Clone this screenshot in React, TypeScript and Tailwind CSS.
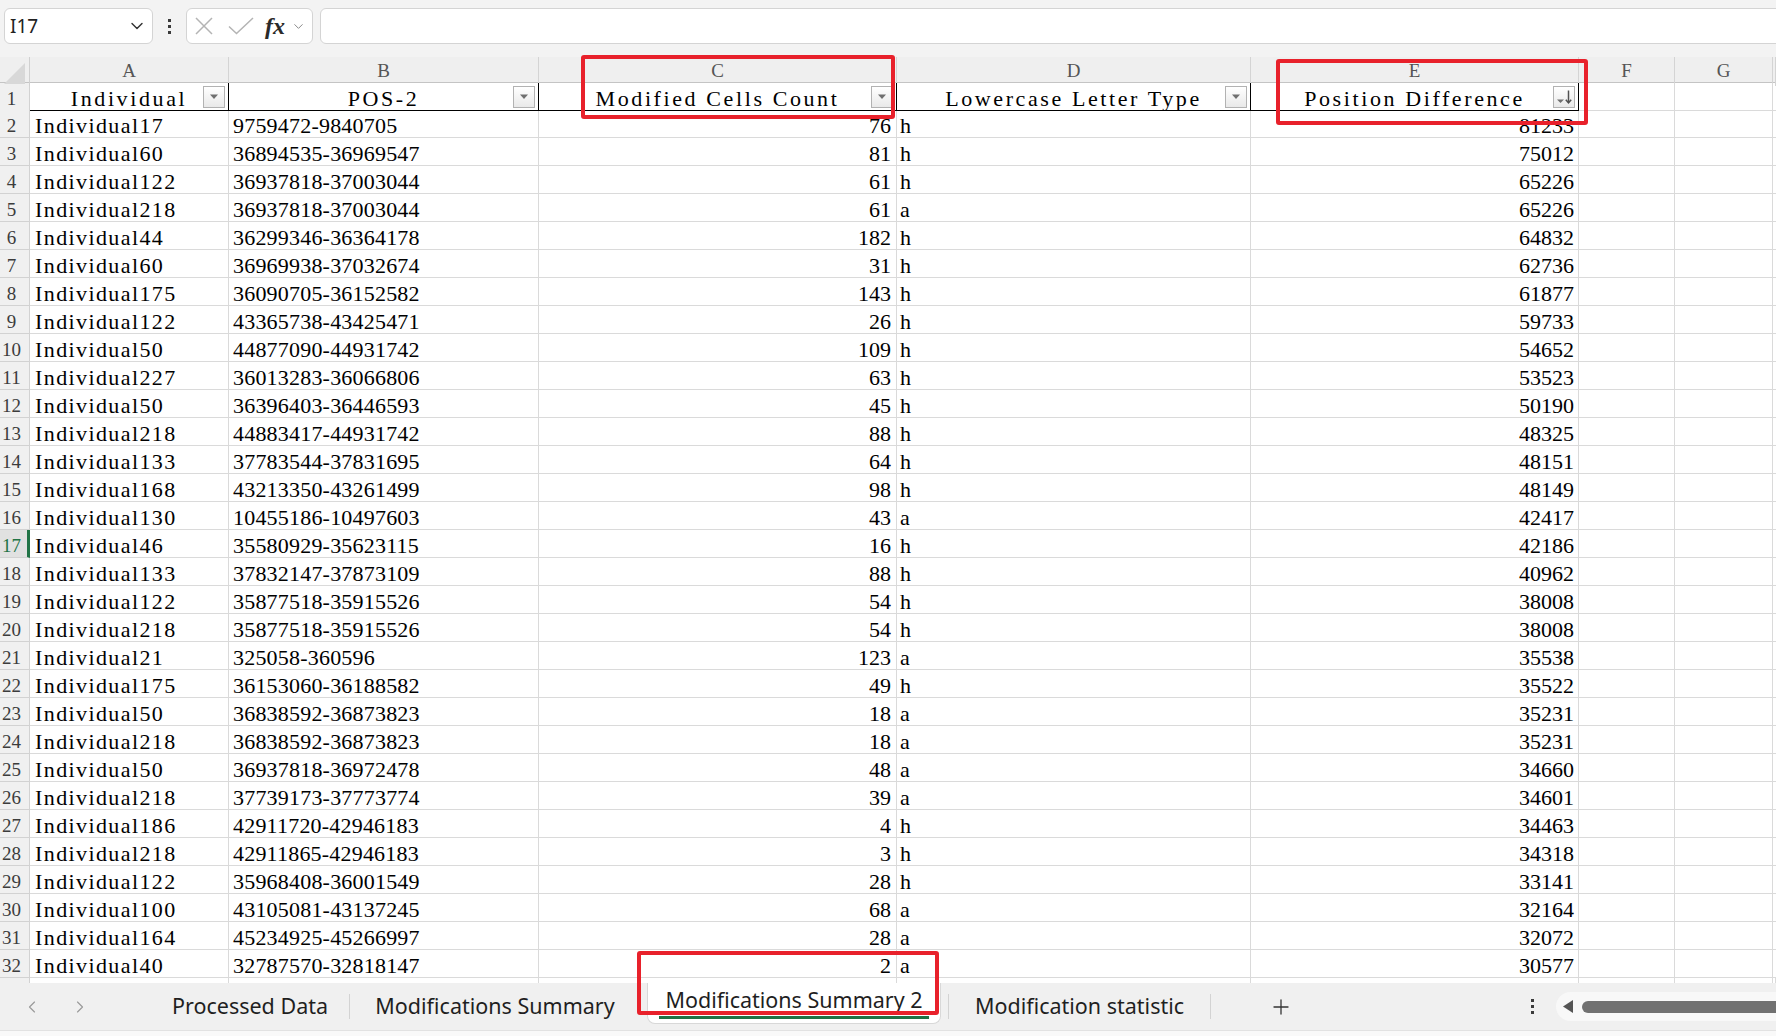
import { ChevronDown, ChevronLeft, ChevronRight, Plus } from 'lucide-react'

type Row = [string, string, number, string, number]

const DATA: Row[] = [
  ['Individual17', '9759472-9840705', 76, 'h', 81233],
  ['Individual60', '36894535-36969547', 81, 'h', 75012],
  ['Individual122', '36937818-37003044', 61, 'h', 65226],
  ['Individual218', '36937818-37003044', 61, 'a', 65226],
  ['Individual44', '36299346-36364178', 182, 'h', 64832],
  ['Individual60', '36969938-37032674', 31, 'h', 62736],
  ['Individual175', '36090705-36152582', 143, 'h', 61877],
  ['Individual122', '43365738-43425471', 26, 'h', 59733],
  ['Individual50', '44877090-44931742', 109, 'h', 54652],
  ['Individual227', '36013283-36066806', 63, 'h', 53523],
  ['Individual50', '36396403-36446593', 45, 'h', 50190],
  ['Individual218', '44883417-44931742', 88, 'h', 48325],
  ['Individual133', '37783544-37831695', 64, 'h', 48151],
  ['Individual168', '43213350-43261499', 98, 'h', 48149],
  ['Individual130', '10455186-10497603', 43, 'a', 42417],
  ['Individual46', '35580929-35623115', 16, 'h', 42186],
  ['Individual133', '37832147-37873109', 88, 'h', 40962],
  ['Individual122', '35877518-35915526', 54, 'h', 38008],
  ['Individual218', '35877518-35915526', 54, 'h', 38008],
  ['Individual21', '325058-360596', 123, 'a', 35538],
  ['Individual175', '36153060-36188582', 49, 'h', 35522],
  ['Individual50', '36838592-36873823', 18, 'a', 35231],
  ['Individual218', '36838592-36873823', 18, 'a', 35231],
  ['Individual50', '36937818-36972478', 48, 'a', 34660],
  ['Individual218', '37739173-37773774', 39, 'a', 34601],
  ['Individual186', '42911720-42946183', 4, 'h', 34463],
  ['Individual218', '42911865-42946183', 3, 'h', 34318],
  ['Individual122', '35968408-36001549', 28, 'h', 33141],
  ['Individual100', '43105081-43137245', 68, 'a', 32164],
  ['Individual164', '45234925-45266997', 28, 'a', 32072],
  ['Individual40', '32787570-32818147', 2, 'a', 30577],
]

const COLS = 'grid grid-cols-[30px_199px_310px_358px_354px_328px_96px_98px_1fr]'
// H only shows a sliver at the right edge, so its letter is left out
const LETTERS = ['A', 'B', 'C', 'D', 'E', 'F', 'G', '']
const HEADERS = ['Individual', 'POS-2', 'Modified Cells Count', 'Lowercase Letter Type', 'Position Difference']

function FilterButton({ sorted }: { sorted?: boolean }) {
  return (
    <div className="absolute bottom-[2px] right-[3px] flex h-[22px] w-[22px] items-center justify-center border border-[#b2b2b2] bg-linear-to-b from-white to-[#e9e9e9]">
      {sorted ? (
        <svg width="20" height="20" viewBox="0 0 20 20">
          <path d="M3 12.5h7l-3.5 3.5z" fill="#6f6f6f" />
          <path d="M14.5 3.5v12" stroke="#505050" strokeWidth="1.5" />
          <path d="M11.8 12.8 14.5 15.8l2.7-3" stroke="#505050" strokeWidth="1.5" fill="none" />
        </svg>
      ) : (
        <svg width="10" height="6" viewBox="0 0 10 6">
          <path d="M1 0.5h8L5 5z" fill="#6f6f6f" />
        </svg>
      )}
    </div>
  )
}

function RowNum({ n }: { n?: number }) {
  if (n === 17) {
    return (
      <div className="flex items-center justify-center border-b border-r-[3px] border-b-[#d2d2d2] border-r-[#217346] bg-[#e1e1e1] pr-[4px] pt-[4px] text-[19px] text-[#217346]">
        {n}
      </div>
    )
  }
  return (
    <div className="flex items-center justify-center border-b border-r border-[#d2d2d2] bg-[#f0f0f0] pr-[6px] pt-[4px] text-[19px] text-[#3c3c3c]">
      {n}
    </div>
  )
}

function Toolbar() {
  return (
    <div className="flex h-[57px] shrink-0 items-start bg-[#f3f3f3] pt-[8px]">
      <div className="ml-[4px] flex h-[36px] w-[149px] items-center justify-between rounded-[6px] border border-[#d4d4d4] bg-white pl-[5px] pr-[5px]">
        <span className="font-['Noto_Sans',sans-serif] text-[19px] text-[#222]">I17</span>
        <ChevronDown className="h-[20px] w-[20px] text-[#333]" strokeWidth={1.7} />
      </div>
      <div className="flex h-[36px] w-[33px] flex-col items-center justify-center gap-[3px]">
        <span className="h-[3px] w-[3px] bg-[#3a3a3a]" />
        <span className="h-[3px] w-[3px] bg-[#3a3a3a]" />
        <span className="h-[3px] w-[3px] bg-[#3a3a3a]" />
      </div>
      <div className="flex h-[36px] w-[127px] items-center rounded-[6px] border border-[#d4d4d4] bg-white pl-[8px]">
        <svg width="18" height="18" viewBox="0 0 18 18" className="shrink-0">
          <path d="M1 1l16 16M17 1 1 17" stroke="#b4b4b4" strokeWidth="1.5" />
        </svg>
        <svg width="26" height="18" viewBox="0 0 26 18" className="ml-[15px] shrink-0">
          <path d="M1 9.5 8.5 16.5 25 1" stroke="#b4b4b4" strokeWidth="1.5" fill="none" />
        </svg>
        <span className="ml-[11px] font-['Liberation_Serif',serif] text-[24px] font-semibold italic leading-none text-[#2a2a2a]">fx</span>
        <ChevronDown className="ml-[6px] h-[15px] w-[15px] text-[#8a8a8a]" strokeWidth={1.6} />
      </div>
      <div className="-mr-[10px] ml-[7px] h-[36px] flex-1 rounded-[6px] border border-[#d4d4d4] bg-white" />
    </div>
  )
}

function Sheet() {
  return (
    <div className="h-[926px] shrink-0 overflow-hidden bg-white font-['Liberation_Serif',serif] text-black">
      <div className={`${COLS} h-[26px] border-b border-[#c4c4c4] bg-[#efefef]`}>
        <div className="relative border-r border-[#d0d0d0]">
          <svg width="22" height="21" viewBox="0 0 22 21" className="absolute bottom-[2px] right-[3px]">
            <path d="M21 0V21H0z" fill="#d8d8d8" />
          </svg>
        </div>
        {LETTERS.map((l, i) => (
          <div key={i} className="flex items-center justify-center border-r border-[#d4d4d4] text-[19px] text-[#555]">
            {l}
          </div>
        ))}
      </div>

      <div className={`${COLS} h-[27px] leading-none`}>
        <RowNum n={1} />
        {HEADERS.map((h, i) => (
          <div key={h} className="relative flex items-center justify-center border-b border-r border-black pt-[5px] text-[22px] tracking-[2.6px]">
            {h}
            <FilterButton sorted={i === 4} />
          </div>
        ))}
        <div className="border-b border-r border-[#dadada]" />
        <div className="border-b border-r border-[#dadada]" />
        <div className="border-b border-[#dadada]" />
      </div>

      {DATA.map((r, i) => (
        <div key={i} className={`${COLS} h-[28px] text-[22px] leading-none`}>
          <RowNum n={i + 2} />
          <div className="flex items-center whitespace-nowrap border-b border-r border-[#dadada] pl-[5px] pt-[4px] tracking-[1.4px]">{r[0]}</div>
          <div className="flex items-center whitespace-nowrap border-b border-r border-[#dadada] pl-[4px] pt-[4px] tracking-[0.2px]">{r[1]}</div>
          <div className="flex items-center justify-end border-b border-r border-[#dadada] pr-[5px] pt-[4px]">{r[2]}</div>
          <div className="flex items-center border-b border-r border-[#dadada] pl-[3px] pt-[4px]">{r[3]}</div>
          <div className="flex items-center justify-end border-b border-r border-[#dadada] pr-[4px] pt-[4px]">{r[4]}</div>
          <div className="border-b border-r border-[#dadada]" />
          <div className="border-b border-r border-[#dadada]" />
          <div className="border-b border-[#dadada]" />
        </div>
      ))}

      {/* row 33 is only a few pixels tall here, so no number shows */}
      <div className={`${COLS} h-[28px]`}>
        <RowNum />
        {LETTERS.map((l, i) => (
          <div key={i} className="border-r border-[#dadada]" />
        ))}
      </div>
    </div>
  )
}

function TabBar() {
  return (
    <div className="flex h-[47px] shrink-0 items-stretch bg-[#f0f0f0] font-['Noto_Sans',sans-serif] text-[21.5px] text-[#1f1f1f]">
      <div className="flex w-[151px] items-center pl-[22px]">
        <ChevronLeft className="h-[20px] w-[20px] text-[#9a9a9a]" strokeWidth={1.4} />
        <ChevronRight className="ml-[28px] h-[20px] w-[20px] text-[#9a9a9a]" strokeWidth={1.4} />
      </div>
      <div className="flex w-[198px] items-center justify-center whitespace-nowrap">Processed Data</div>
      <div className="my-[11px] w-px bg-[#d3d3d3]" />
      <div className="flex w-[290px] items-center justify-center whitespace-nowrap">Modifications Summary</div>
      <div className="w-[7px]" />
      <div className="relative mb-[6px] flex w-[294px] items-center justify-center whitespace-nowrap rounded-b-[8px] border-x border-b border-[#d8d8d8] bg-white pb-[5px]">
        Modifications Summary 2
        <div className="absolute bottom-[4px] left-[11px] right-[11px] h-[3px] bg-[#1e7145]" />
      </div>
      <div className="w-[7px]" />
      <div className="my-[11px] w-px bg-[#d3d3d3]" />
      <div className="flex w-[261px] items-center justify-center whitespace-nowrap">Modification statistic</div>
      <div className="my-[11px] w-px bg-[#d3d3d3]" />
      <div className="flex w-[140px] items-center justify-center">
        <Plus className="h-[24px] w-[24px] text-[#333]" strokeWidth={1.3} />
      </div>
      <div className="flex flex-1 items-center justify-end pr-[22px]">
        <div className="flex flex-col gap-[3px]">
          <span className="h-[3px] w-[3px] bg-[#3a3a3a]" />
          <span className="h-[3px] w-[3px] bg-[#3a3a3a]" />
          <span className="h-[3px] w-[3px] bg-[#3a3a3a]" />
        </div>
      </div>
      <div className="my-[9px] flex w-[220px] items-center rounded-l-full bg-[#f8f8f8] pl-[7px]">
        <svg width="10" height="13" viewBox="0 0 10 13" className="shrink-0">
          <path d="M10 0v13L0 6.5z" fill="#555" />
        </svg>
        <div className="ml-[9px] h-[12px] flex-1 rounded-l-full bg-[#717171]" />
      </div>
    </div>
  )
}

export default function App() {
  return (
    <div className="relative flex h-[1036px] w-[1776px] flex-col overflow-hidden bg-[#f3f3f3]">
      <Toolbar />
      <Sheet />
      <TabBar />
      <div className="h-[6px] shrink-0 border-t border-[#e2e2e2] bg-[#f9f9f9]" />

      <div className="pointer-events-none absolute left-[581px] top-[55px] h-[64px] w-[314px] rounded-[3px] border-[4px] border-[#e8212b]" />
      <div className="pointer-events-none absolute left-[1276px] top-[59px] h-[66px] w-[312px] rounded-[3px] border-[4px] border-[#e8212b]" />
      <div className="pointer-events-none absolute left-[637px] top-[951px] h-[64px] w-[302px] rounded-[3px] border-[4px] border-[#e8212b]" />
    </div>
  )
}
